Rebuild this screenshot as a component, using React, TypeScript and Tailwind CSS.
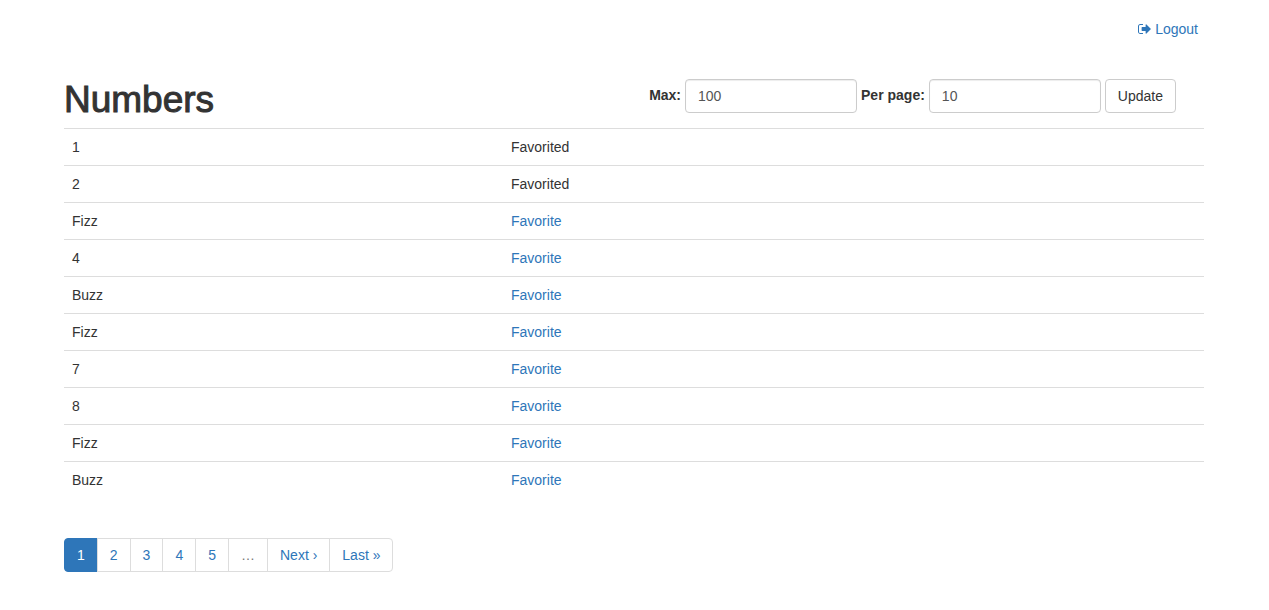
import React from "react";

const rows = [
  { value: "1", favorited: true },
  { value: "2", favorited: true },
  { value: "Fizz", favorited: false },
  { value: "4", favorited: false },
  { value: "Buzz", favorited: false },
  { value: "Fizz", favorited: false },
  { value: "7", favorited: false },
  { value: "8", favorited: false },
  { value: "Fizz", favorited: false },
  { value: "Buzz", favorited: false },
];

const pages = ["2", "3", "4", "5"];

function LogoutIcon() {
  return (
    <svg viewBox="0 0 1664 1792" className="h-3.5 w-[13px]" aria-hidden="true" fill="currentColor">
      <path d="M640 1440q0 4 1 20t.5 26.500-3 23.500-10 19.500-20.500 6.500h-320q-119 0-203.500-84.500t-84.500-203.500v-704q0-119 84.500-203.500t203.500-84.500h320q13 0 22.500 9.500t9.500 22.500q0 4 1 20t.5 26.500-3 23.500-10 19.500-20.500 6.500h-320q-66 0-113 47t-47 113v704q0 66 47 113t113 47h312l11.500 1 11.500 3 8 5.500 7 9 2 13.500zm1008-544q0 26-19 45l-544 544q-19 19-45 19t-45-19-19-45v-288h-448q-26 0-45-19t-19-45v-384q0-26 19-45t45-19h448v-288q0-26 19-45t45-19 45 19l544 544q19 19 19 45z" />
    </svg>
  );
}

const field =
  "h-[34px] w-[172px] rounded border border-[#ccc] bg-white px-3 text-sm text-[#555] shadow-[inset_0_1px_1px_rgba(0,0,0,0.075)] outline-none";
const pageItem =
  "-ml-px block border border-[#ddd] bg-white px-3 py-1.5 text-[#2e76b9]";

export default function App() {
  return (
    <div className="mx-auto max-w-[1171px] pr-4 pl-[15px] font-['Liberation_Sans',Arial,sans-serif] text-sm leading-5 text-[#333]">
      <header className="flex justify-end pt-[19px] pr-1.5">
        <a href="#logout" className="flex items-center gap-1 text-[#2e76b9]">
          <LogoutIcon />
          Logout
        </a>
      </header>
      <div className="flex items-start justify-between pt-10 pr-7">
        <h1 className="text-[37px] leading-[42px] font-medium [-webkit-text-stroke:1px_#333]">Numbers</h1>
        <form className="flex items-center gap-1" onSubmit={(e) => e.preventDefault()}>
          <label htmlFor="max" className="pb-0.5 font-bold">Max:</label>
          <input id="max" type="text" defaultValue="100" className={field} />
          <label htmlFor="per-page" className="pb-0.5 font-bold">Per page:</label>
          <input id="per-page" type="text" defaultValue="10" className={field} />
          <button type="submit" className="h-[34px] rounded border border-[#ccc] bg-white px-3">
            Update
          </button>
        </form>
      </div>
      <table className="mt-[7px] w-full table-fixed border-collapse">
        <tbody>
          {rows.map((row, i) => (
            <tr key={i} className="border-t border-[#ddd]">
              <td className="w-[439px] p-2">{row.value}</td>
              <td className="p-2">
                {row.favorited ? "Favorited" : <a href="#favorite" className="text-[#2e76b9]">Favorite</a>}
              </td>
            </tr>
          ))}
        </tbody>
      </table>
      <nav className="mt-10" aria-label="Pagination">
        <ul className="flex">
          <li>
            <a href="#1" aria-current="page" className="block rounded-l border border-[#2e76b9] bg-[#2e76b9] px-3 py-1.5 text-white">1</a>
          </li>
          {pages.map((p) => (
            <li key={p}><a href={"#" + p} className={pageItem}>{p}</a></li>
          ))}
          <li><span className="-ml-px block border border-[#ddd] bg-white px-3 py-1.5 text-[#777]">…</span></li>
          <li><a href="#next" className={pageItem}>Next ›</a></li>
          <li><a href="#last" className={pageItem + " rounded-r"}>Last »</a></li>
        </ul>
      </nav>
    </div>
  );
}
